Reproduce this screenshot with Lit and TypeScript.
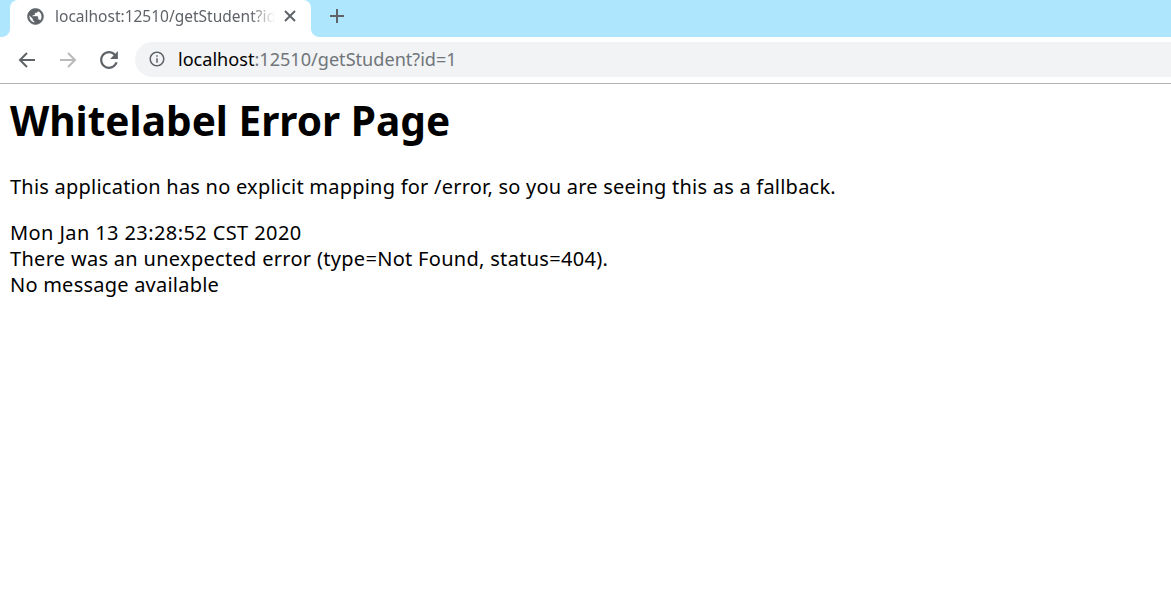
import { LitElement, html, css } from "lit";
import { customElement } from "lit/decorators.js";

@customElement("app-root")
export class AppRoot extends LitElement {
  static styles = css`
    :host { display: block; font-family: "Noto Sans", sans-serif; color: #000; background: #fff; min-height: 605px; }
    .tabstrip { height: 37px; background: #aee7fd; display: flex; align-items: flex-end; padding-left: 10px; }
    .tab { position: relative; width: 301px; height: 37px; background: #fff; border-radius: 8px 8px 0 0; display: flex; align-items: center; box-sizing: border-box; padding: 0 8px 5px 16px; }
    .tab::before, .tab::after { content: ""; position: absolute; bottom: 0; width: 8px; height: 8px; }
    .tab::before { left: -8px; background: radial-gradient(circle at 0 0, transparent 7.5px, #fff 8.2px); }
    .tab::after { right: -8px; background: radial-gradient(circle at 100% 0, transparent 7.5px, #fff 8.2px); }
    .globe { width: 19px; height: 19px; flex: none; }
    .title { margin-left: 10px; width: 220px; overflow: hidden; white-space: nowrap; font-size: 15.5px; color: #5f6368; -webkit-mask-image: linear-gradient(90deg, #000 195px, transparent 220px); mask-image: linear-gradient(90deg, #000 195px, transparent 220px); }
    .close { margin-left: 8px; width: 14px; height: 14px; flex: none; }
    .plus { margin-left: 18px; margin-bottom: 13px; width: 16px; height: 16px; flex: none; }
    .toolbar { height: 46px; border-bottom: 1px solid #b4b4b4; display: flex; align-items: center; padding-left: 17px; }
    .nav { width: 20px; height: 20px; flex: none; margin-right: 21px; }
    .omni { flex: 1; box-sizing: border-box; height: 35px; margin: 0 0 1px -5px; background: #f1f3f4; border-radius: 18px 0 0 18px; display: flex; align-items: center; padding: 0 0 1px 13px; font-size: 18.1px; color: #70757a; }
    .omni svg { width: 18px; height: 18px; margin-right: 12px; flex: none; }
    .omni b { font-weight: 400; color: #000; }
    .page { padding: 0 10px; }
    h1 { font-size: 40.6px; font-weight: 700; margin: 0; padding-top: 8px; line-height: 58px; }
    p { font-size: 20px; line-height: 26px; margin: 0; letter-spacing: 0.23px; }
    .p1 { margin-top: 24px; }
    .p2 { margin-top: 20px; letter-spacing: 0.4px; }
    .p3 { letter-spacing: 0.3px; }
  `;
  render() {
    return html`
      <div class="tabstrip">
        <div class="tab">
          <svg class="globe" viewBox="0 0 24 24"><path fill="#5f6368" stroke="#5f6368" stroke-width="0.8" d="M12 2C6.48 2 2 6.48 2 12s4.48 10 10 10 10-4.48 10-10S17.52 2 12 2zm-1 17.93c-3.95-.49-7-3.85-7-7.93 0-.62.08-1.21.21-1.79L9 15v1c0 1.1.9 2 2 2v1.93zm6.9-2.54c-.26-.81-1-1.39-1.9-1.39h-1v-3c0-.55-.45-1-1-1H8v-2h2c.55 0 1-.45 1-1V7h2c1.1 0 2-.9 2-2v-.41c2.93 1.19 5 4.06 5 7.41 0 2.08-.8 3.97-2.1 5.39z"/></svg>
          <div class="title">localhost:12510/getStudent?id=1</div>
          <svg class="close" viewBox="0 0 14 14"><path d="M2 2l10 10M12 2L2 12" stroke="#5f6368" stroke-width="2" fill="none"/></svg>
        </div>
        <svg class="plus" viewBox="0 0 16 16"><path d="M8 1v14M1 8h14" stroke="#5f6368" stroke-width="2" fill="none"/></svg>
      </div>
      <div class="toolbar">
        <svg class="nav" viewBox="0 0 20 20"><path d="M18 10H3M10 3l-7 7 7 7" fill="none" stroke="#5f6368" stroke-width="2"/></svg>
        <svg class="nav" viewBox="0 0 20 20"><path d="M2 10h15M10 3l7 7-7 7" fill="none" stroke="#b9babc" stroke-width="2"/></svg>
        <svg class="nav" viewBox="3 3 18 18"><path fill="#5f6368" d="M17.65 6.35C16.2 4.9 14.21 4 12 4c-4.42 0-7.99 3.58-7.99 8s3.57 8 7.99 8c3.73 0 6.84-2.55 7.73-6h-2.08c-.82 2.33-3.04 4-5.65 4-3.31 0-6-2.69-6-6s2.69-6 6-6c1.66 0 3.14.69 4.22 1.78L13 11h7V4l-2.35 2.35z"/></svg>
        <div class="omni">
          <svg viewBox="0 0 24 24"><path fill="#5f6368" d="M11 7h2v2h-2zm0 4h2v6h-2zm1-9C6.48 2 2 6.48 2 12s4.48 10 10 10 10-4.48 10-10S17.52 2 12 2zm0 18c-4.41 0-8-3.59-8-8s3.59-8 8-8 8 3.59 8 8-3.59 8-8 8z"/></svg>
          <span><b>localhost</b>:12510/getStudent?id=1</span>
        </div>
      </div>
      <div class="page">
        <h1>Whitelabel Error Page</h1>
        <p class="p1">This application has no explicit mapping for /error, so you are seeing this as a fallback.</p>
        <p class="p2">Mon Jan 13 23:28:52 CST 2020</p>
        <p class="p3">There was an unexpected error (type=Not Found, status=404).</p>
        <p>No message available</p>
      </div>
    `;
  }
}
